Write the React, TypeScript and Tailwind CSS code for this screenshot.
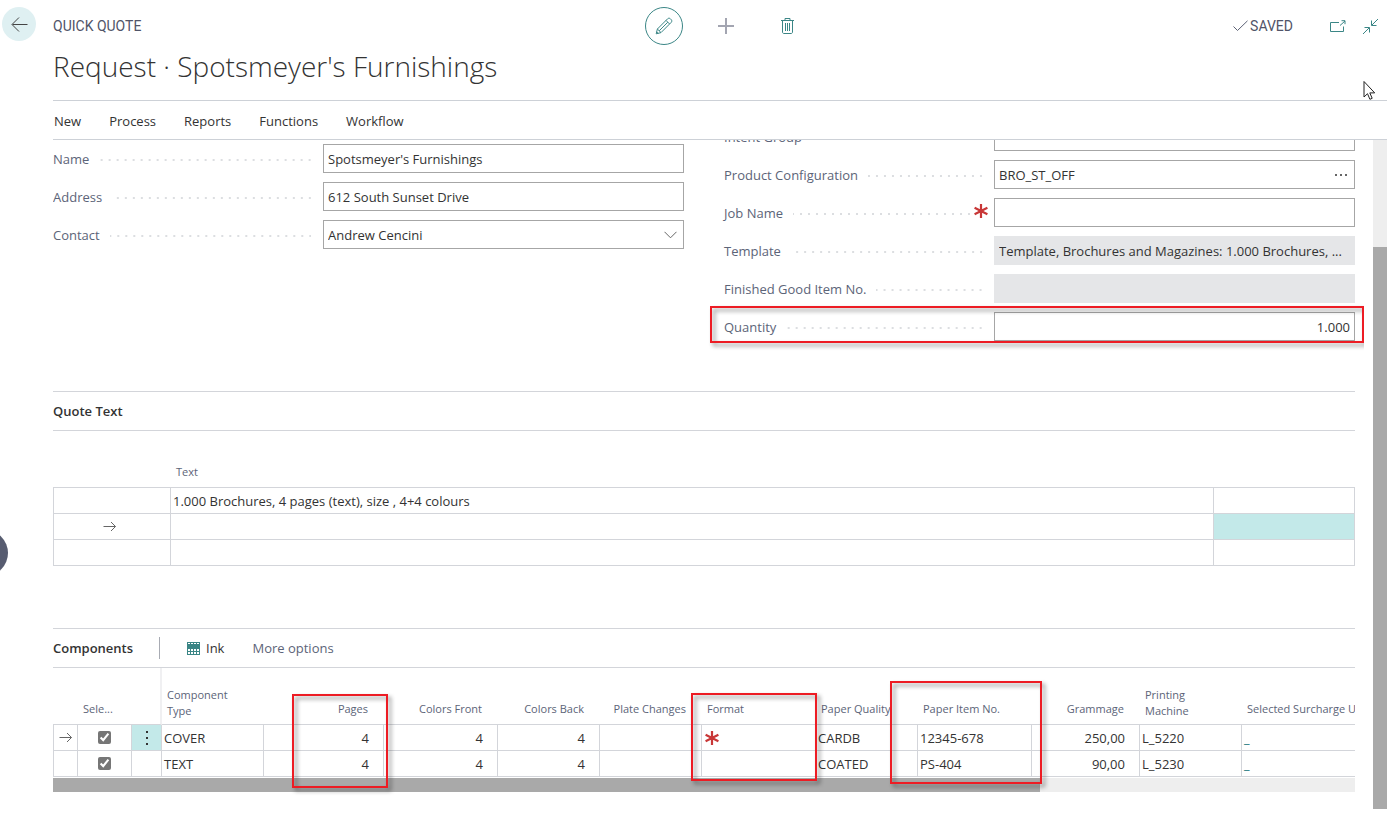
import { useState } from "react";
import type { ReactNode } from "react";
import clsx from "clsx";

interface FieldProps {
  id: string;
  label: string;
  value?: string;
  required?: boolean;
  disabled?: boolean;
  numeric?: boolean;
  action?: ReactNode;
}

interface Component {
  type: string;
  pages: string;
  front: string;
  back: string;
  quality: string;
  item: string;
  grammage: string;
  machine: string;
  missingFormat?: boolean;
}

interface Column {
  title: string;
  width: string;
  right?: boolean;
  wrap?: boolean;
}

const menu = ["New", "Process", "Reports", "Functions", "Workflow"];

const quoteLines = ["1.000 Brochures, 4 pages (text), size , 4+4 colours", "", ""];

const components: Component[] = [
  {
    type: "COVER",
    pages: "4",
    front: "4",
    back: "4",
    quality: "CARDB",
    item: "12345-678",
    grammage: "250,00",
    machine: "L_5220",
    missingFormat: true,
  },
  {
    type: "TEXT",
    pages: "4",
    front: "4",
    back: "4",
    quality: "COATED",
    item: "PS-404",
    grammage: "90,00",
    machine: "L_5230",
  },
];

const columns: Column[] = [
  { title: "", width: "w-[25px]" },
  { title: "Sele...", width: "w-[54px]" },
  { title: "", width: "w-[30px]" },
  { title: "Component\nType", width: "w-[102px]", wrap: true },
  { title: "Pages", width: "w-[120px]", right: true },
  { title: "Colors Front", width: "w-[114px]", right: true },
  { title: "Colors Back", width: "w-[102px]", right: true },
  { title: "Plate Changes", width: "w-[102px]", right: true },
  { title: "Format", width: "w-[114px]" },
  { title: "Paper Quality", width: "w-[102px]" },
  { title: "Paper Item No.", width: "w-[114px]" },
  { title: "Grammage", width: "w-[108px]", right: true },
  { title: "Printing\nMachine", width: "w-[102px]", wrap: true },
  { title: "Selected Surcharge U", width: "w-[180px]" },
];

function Asterisk() {
  return (
    <svg width="14" height="14" viewBox="0 0 14 14" stroke="#c83737" strokeWidth="2.2" className="shrink-0">
      <path d="M7 0v14M.6 3.7l12.8 6.6M.6 10.3l12.8-6.6" />
    </svg>
  );
}

function RowArrow() {
  return (
    <svg width="14" height="12" viewBox="0 0 14 12" fill="none" stroke="#666" className="mx-auto">
      <path d="M.5 5.5h12M8 1l4.5 4.5L8 10" />
    </svg>
  );
}

function Highlight({ className }: { className: string }) {
  return (
    <div
      className={clsx(
        "pointer-events-none absolute z-10 border-2 border-[#ed1c24] drop-shadow-[3px_3px_2px_rgba(0,0,0,0.45)]",
        className
      )}
    />
  );
}

function Field({ id, label, value = "", required, disabled, numeric, action }: FieldProps) {
  const [text, setText] = useState(value);
  return (
    <div className="flex items-center">
      <label htmlFor={id} className="flex w-[270px] shrink-0 items-center pr-3 text-[#5c6478]">
        <span className="whitespace-nowrap">{label}</span>
        <span
          className={clsx(
            "mt-[2px] ml-[10px] h-[2px] flex-1 bg-[linear-gradient(90deg,transparent_6px,#dcdee1_6px)] bg-[length:8px_2px] bg-right",
            required && "mr-1"
          )}
        />
        {required && (
          <span className="-mr-[6px] mb-1">
            <Asterisk />
          </span>
        )}
      </label>
      <div className="relative flex min-w-0 flex-1">
        <input
          id={id}
          value={text}
          disabled={disabled}
          onChange={(e) => setText(e.target.value)}
          className={clsx(
            "h-[29px] w-full min-w-0 border px-1 text-[#333] outline-none",
            disabled ? "border-[#e5e6e8] bg-[#e5e6e8]" : "border-[#a6a6a6] bg-white",
            numeric && "text-right"
          )}
        />
        {action}
      </div>
    </div>
  );
}

function Header() {
  return (
    <header className="h-[100px]">
      <div className="grid h-[52px] grid-cols-[1fr_auto_1fr] items-center">
        <span className="pb-px font-[Roboto] text-[14px] text-[#505468]">QUICK QUOTE</span>
        <div className="flex items-center gap-[35px]">
          <button
            aria-label="Edit"
            className="flex size-[38px] items-center justify-center rounded-full border border-[#3b8686]"
          >
            <svg width="18" height="18" viewBox="0 0 18 18" fill="none" stroke="#3b8686">
              <path d="M1.2 16.8 2.4 12 12.6 1.8c.8-.8 2-.8 2.8 0l.8.8c.8.8.8 2 0 2.8L6 15.6zM2.4 12 6 15.6M11 3.4l3.6 3.6M4.2 13.8 12.8 5.2M1.6 14.8l1.6 1.6" />
            </svg>
          </button>
          <button aria-label="New">
            <svg width="16" height="16" viewBox="0 0 16 16" stroke="#a3a5b1" strokeWidth="2">
              <path d="M8 0v16M0 8h16" />
            </svg>
          </button>
          <button aria-label="Delete" className="ml-[11px]">
            <svg width="15" height="18" viewBox="0 0 15 18" fill="none" stroke="#3b8686">
              <path d="M1 3.5h13M5 3V1.5h5V3M2.5 4v11c0 .9.5 1.5 1.4 1.5h7.2c.9 0 1.4-.6 1.4-1.5V4M5.5 6v8M7.5 6v8M9.5 6v8" />
            </svg>
          </button>
        </div>
        <div className="flex items-center justify-end pr-2">
          <svg width="15" height="12" viewBox="0 0 15 12" fill="none" stroke="#5c6175">
            <path d="m.5 6.5 4 4L14.5.8" />
          </svg>
          <span className="ml-[2px] pb-px font-[Roboto] text-[14px] text-[#505468]">SAVED</span>
          <button aria-label="Open in new window" className="ml-[37px]">
            <svg width="16" height="13" viewBox="0 0 16 13" fill="none" stroke="#3b8686">
              <path d="M9 2.5H.5v9h13V6.500M10 5.500l5-4.500M11.500.7H15v3.500" />
            </svg>
          </button>
          <button aria-label="Collapse" className="ml-4">
            <svg width="17" height="17" viewBox="0 0 17 17" fill="none" stroke="#3b8686">
              <path d="M16 1 9.8 7.2M9.500 2.500v5h5M1 16l6.200-6.200M2.500 9.500h5v5" />
            </svg>
          </button>
        </div>
      </div>
      <h1 className="text-[28px] leading-7 font-light text-[#333]">
        Request · Spotsmeyer's Furnishings
      </h1>
    </header>
  );
}

function SectionTitle({ children }: { children: ReactNode }) {
  return <div className="flex h-10 items-center border-y border-[#d3d5da]">{children}</div>;
}

function QuoteText() {
  return (
    <section className="mt-[50px]">
      <SectionTitle>
        <h2 className="font-semibold">Quote Text</h2>
      </SectionTitle>
      <table className="w-full table-fixed border-separate border-spacing-0">
        <thead>
          <tr className="h-[57px] text-left align-bottom text-[11px] leading-4 text-[#5c6478]">
            <th className="w-[118px] border-b border-[#d3d5da]" />
            <th className="border-b border-[#d3d5da] pb-[7px] pl-[5px] font-normal">Text</th>
            <th className="w-[141px] border-b border-[#d3d5da]" />
          </tr>
        </thead>
        <tbody>
          {quoteLines.map((line, i) => (
            <tr key={i} className="h-[26px]">
              <td className="border-x border-b border-[#d3d5da] pr-1">{i === 1 && <RowArrow />}</td>
              <td className="border-r border-b border-[#d3d5da] pl-[2px]">{line}</td>
              <td className={clsx("border-r border-b border-[#d3d5da]", i === 1 && "bg-[#c3e9e9]")} />
            </tr>
          ))}
        </tbody>
      </table>
    </section>
  );
}

function ComponentRow({ row, current }: { row: Component; current: boolean }) {
  const [checked, setChecked] = useState(true);
  const cell = "border-r border-b border-[#d3d5da]";
  const text = clsx(cell, "pl-[2px]");
  const number = clsx(cell, "pr-[14px] text-right");
  return (
    <tr className="h-[26px]">
      <td className={clsx(cell, "border-l")}>{current && <RowArrow />}</td>
      <td className={cell}>
        <input
          type="checkbox"
          aria-label={`Select ${row.type}`}
          checked={checked}
          onChange={(e) => setChecked(e.target.checked)}
          className="mx-auto block size-[13px] accent-[#767676]"
        />
      </td>
      <td className={clsx(cell, current && "bg-[#c3e9e9]")}>
        {current && (
          <button aria-label="Row options" className="mx-auto block">
            <svg width="2" height="14" viewBox="0 0 2 14" fill="#333">
              <path d="M0 0h2v2H0zM0 6h2v2H0zM0 12h2v2H0z" />
            </svg>
          </button>
        )}
      </td>
      <td className={text}>{row.type}</td>
      <td className={number}>{row.pages}</td>
      <td className={number}>{row.front}</td>
      <td className={number}>{row.back}</td>
      <td className={number} />
      <td className={clsx(cell, "pl-[3px]")}>{row.missingFormat && <Asterisk />}</td>
      <td className={text}>{row.quality}</td>
      <td className={text}>{row.item}</td>
      <td className={number}>{row.grammage}</td>
      <td className={text}>{row.machine}</td>
      <td className={text}>
        <a href="#surcharge" className="font-semibold text-[#1f7a80]">
          _
        </a>
      </td>
    </tr>
  );
}

function Components() {
  return (
    <section className="relative mt-[62px]">
      <SectionTitle>
        <h2 className="w-[106px] font-semibold">Components</h2>
        <div className="h-[22px] w-px bg-[#a8abb3]" />
        <button className="ml-[27px] flex items-center">
          <svg width="13" height="13" viewBox="0 0 13 13" className="mr-[6px]">
            <path fill="#3b8686" d="M0 0h13v13H0z" />
            <path
              fill="#fff"
              d="M1 1h2v1H1zM4 1h2v1H4zM7 1h2v1H7zM10 1h2v1h-2zM1 7h2v2H1zM4 7h2v2H4zM7 7h2v2H7zM10 7h2v2h-2zM1 10h2v2H1zM4 10h2v2H4zM7 10h2v2H7zM10 10h2v2h-2z"
            />
          </svg>
          Ink
        </button>
        <button className="ml-7 text-[#5c6478]">More options</button>
      </SectionTitle>
      <div className="overflow-hidden">
        <table className="w-[1369px] table-fixed border-separate border-spacing-0">
          <thead>
            <tr className="h-[57px] text-left align-bottom text-[11px] leading-4 text-[#5c6478]">
              {columns.map((col, i) => (
                <th
                  key={i}
                  className={clsx(
                    "border-b border-[#d3d5da] font-normal whitespace-pre-line",
                    col.width,
                    col.wrap ? "pb-[5px]" : "pb-[7px]",
                    col.right ? "pr-4 text-right" : "pl-[5px]",
                    i === 2 && "border-r-2 border-r-[#f0f0f2]"
                  )}
                >
                  {col.title}
                </th>
              ))}
            </tr>
          </thead>
          <tbody>
            {components.map((row, i) => (
              <ComponentRow key={row.type} row={row} current={i === 0} />
            ))}
          </tbody>
        </table>
      </div>
      <div className="mt-px h-[14px] bg-[#eee]">
        <div className="h-full w-[987px] bg-[#a9a9a9]" />
      </div>
      <Highlight className="top-[66px] left-[239px] h-[94px] w-[96px]" />
      <Highlight className="top-[65px] left-[638px] h-[88px] w-[126px]" />
      <Highlight className="top-[53px] left-[837px] h-[103px] w-[152px]" />
    </section>
  );
}

export default function App() {
  return (
    <div className="relative flex h-screen overflow-hidden bg-white font-['Open_Sans',sans-serif] text-[13px] leading-[18px] text-[#333]">
      <aside className="w-[53px] shrink-0 pt-[7px] pl-[2px]">
        <button aria-label="Back" className="flex size-[34px] items-center justify-center rounded-full bg-[#dff0f2]">
          <svg width="17" height="16" viewBox="0 0 17 16" fill="none" stroke="#444">
            <path d="M16.5 8.5H1.500M8 1.500l-7 7 7 7" />
          </svg>
        </button>
      </aside>
      <div className="absolute top-[530px] -left-[38px] size-[46px] rounded-full bg-[#575c70]" />
      <div className="flex min-w-0 flex-1 flex-col pr-[5px] pb-[13px]">
        <Header />
        <nav className="flex h-10 shrink-0 items-center gap-7 border-y border-[#cdd1d7] pt-px pl-px">
          {menu.map((item) => (
            <button key={item}>{item}</button>
          ))}
        </nav>
        <div className="flex min-h-0 flex-1">
          <main className="mr-[9px] min-w-0 flex-1 overflow-hidden pr-[9px]">
            <div className="grid grid-cols-2 gap-10">
              <div className="flex flex-col gap-[9px] pt-1">
                <Field id="name" label="Name" value="Spotsmeyer's Furnishings" />
                <Field id="address" label="Address" value="612 South Sunset Drive" />
                <Field
                  id="contact"
                  label="Contact"
                  value="Andrew Cencini"
                  action={
                    <button aria-label="Choose contact" className="absolute top-[11px] right-[7px]">
                      <svg width="13" height="8" viewBox="0 0 13 8" fill="none" stroke="#666">
                        <path d="m.5.8 6 6 6-6" />
                      </svg>
                    </button>
                  }
                />
              </div>
              <div className="-mt-[18px] flex flex-col gap-[9px]">
                <Field id="intent" label="Intent Group" />
                <Field
                  id="product"
                  label="Product Configuration"
                  value="BRO_ST_OFF"
                  action={
                    <button aria-label="Choose configuration" className="absolute top-[14px] right-2">
                      <svg width="12" height="2" viewBox="0 0 12 2" fill="#666">
                        <path d="M0 0h2v2H0zM5 0h2v2H5zM10 0h2v2h-2z" />
                      </svg>
                    </button>
                  }
                />
                <Field id="job" label="Job Name" required />
                <Field
                  id="template"
                  label="Template"
                  value="Template, Brochures and Magazines: 1.000 Brochures, ..."
                  disabled
                />
                <Field id="finished" label="Finished Good Item No." disabled />
                <div className="relative">
                  <Field id="quantity" label="Quantity" value="1.000" numeric />
                  <Highlight className="-top-[6px] -right-[9px] -left-[14px] h-[37px]" />
                </div>
              </div>
            </div>
            <QuoteText />
            <Components />
          </main>
          <div className="w-[14px] shrink-0 bg-[#eee] pt-[107px]">
            <div className="h-full bg-[#a9a9a9]" />
          </div>
        </div>
      </div>
      <svg
        width="13"
        height="21"
        viewBox="0 0 13 21"
        fill="#fff"
        stroke="#222"
        className="absolute top-[80px] right-[16px]"
      >
        <path d="M1 1.500v15.500l3.500-3.300 2.400 5.600 2.300-1-2.400-5.400h4.900z" />
      </svg>
    </div>
  );
}
